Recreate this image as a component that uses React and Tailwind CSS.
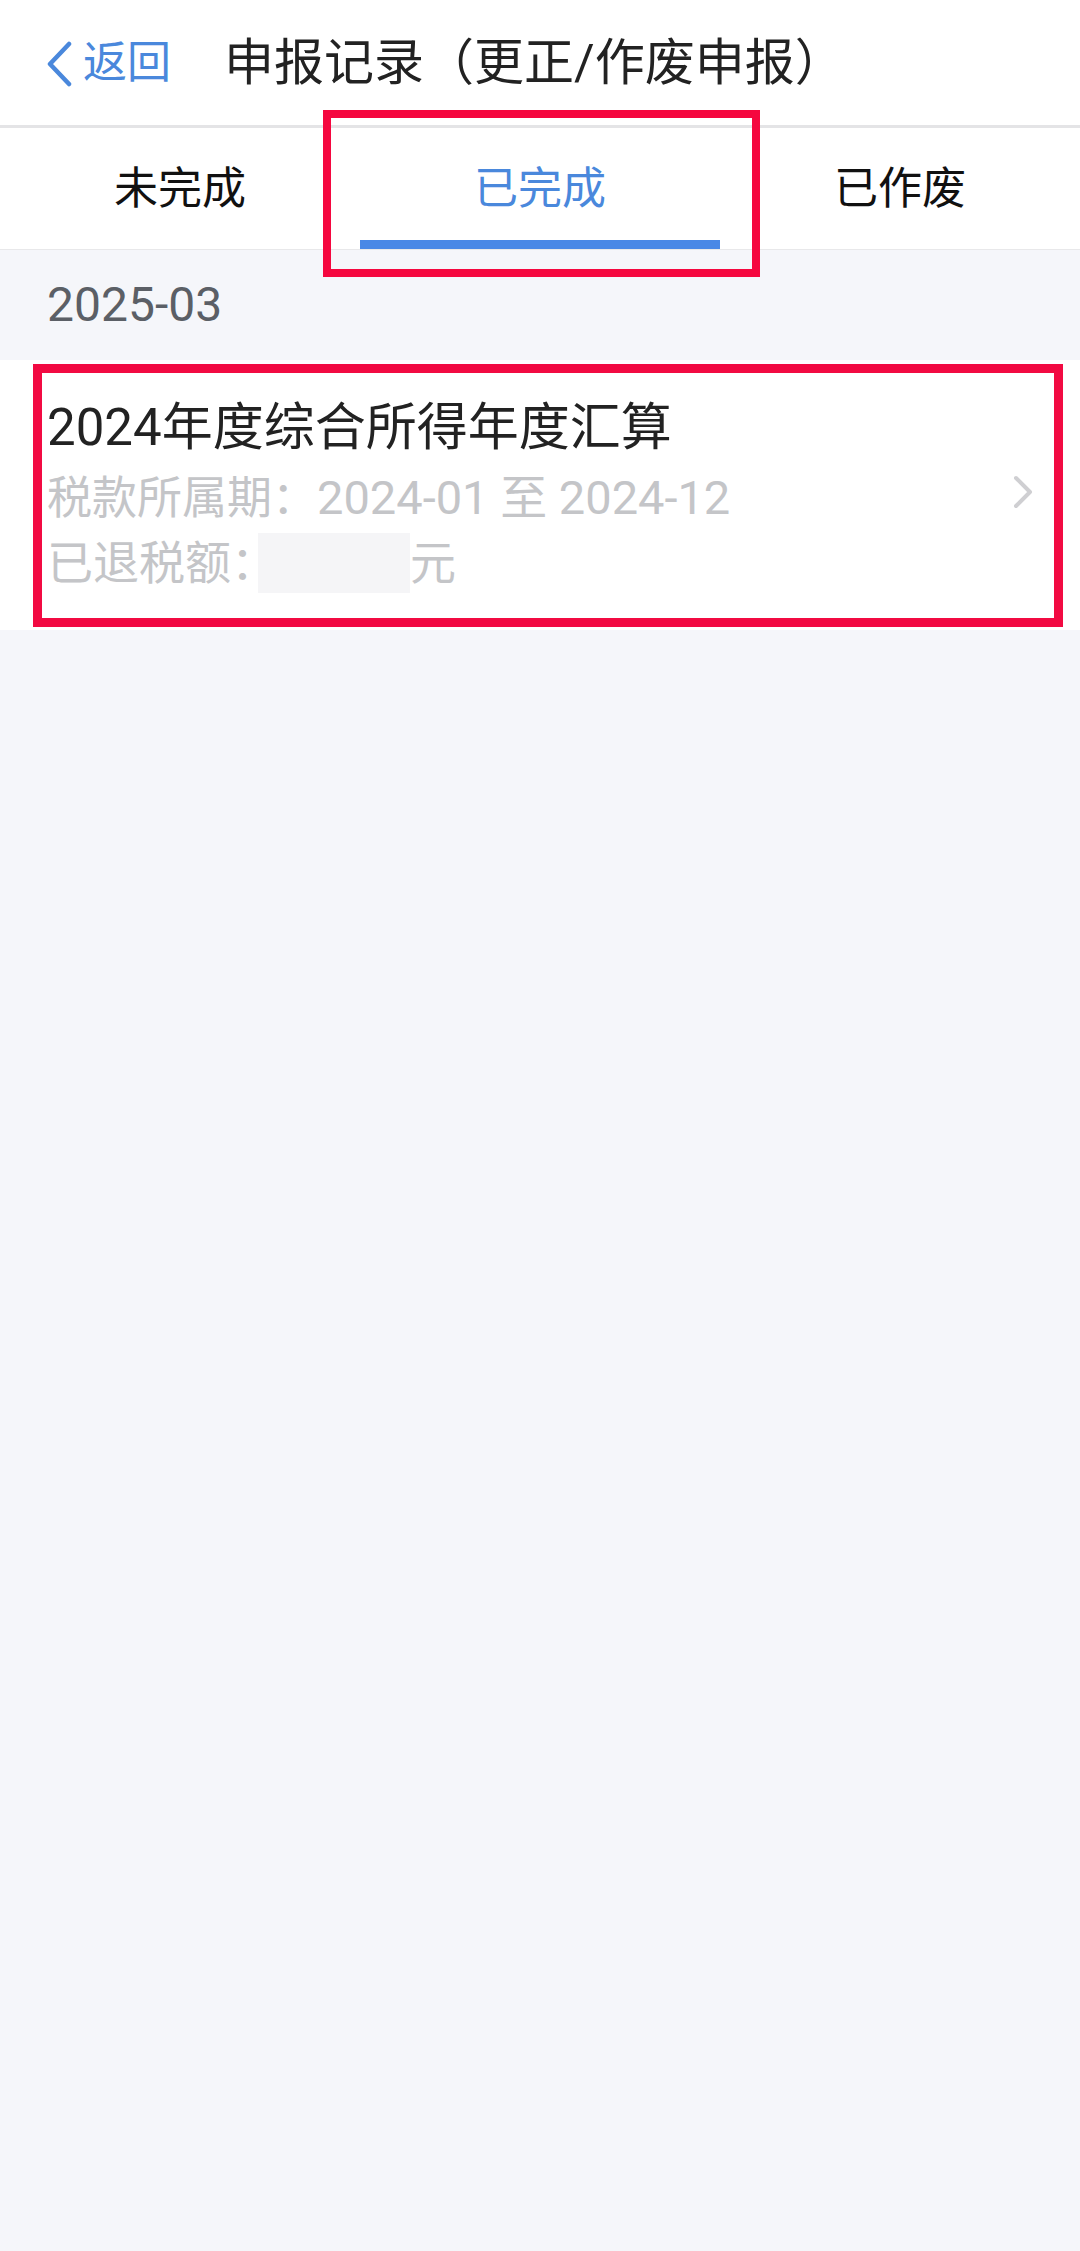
import React from "react";

const font = { fontFamily: '"Roboto", "Noto Sans CJK SC", sans-serif' };

export default function App() {
  return (
    <div
      className="relative w-[1080px] min-h-[2251px] bg-[#f5f6fa]"
      style={font}
    >
      {/* Header */}
      <div className="flex h-[128px] items-center border-b-[3px] border-[#e4e4e6] bg-white">
        <div className="ml-[45px] flex items-center text-[#4a88dc]">
          <svg width="28" height="46" viewBox="0 0 28 46" className="mt-[2px]">
            <path
              d="M24 3 L5 23 L24 43"
              fill="none"
              stroke="#4a88dc"
              strokeWidth="4.5"
              strokeLinecap="round"
              strokeLinejoin="round"
            />
          </svg>
          <span className="ml-[10px] text-[44px] leading-none">返回</span>
        </div>
        <div className="ml-[53px] text-[50px] leading-none text-[#222222]">
          申报记录（更正/作废申报）
        </div>
      </div>

      {/* Tabs */}
      <div className="grid h-[122px] grid-cols-3 border-b border-[#e8e8ea] bg-white">
        <div className="flex items-center justify-center text-[44px] text-[#111111]">
          未完成
        </div>
        <div className="relative flex items-center justify-center text-[44px] text-[#4a88dc]">
          已完成
          <div className="absolute bottom-0 left-0 right-0 h-[9px] bg-[#4a88e6]" />
        </div>
        <div className="flex items-center justify-center text-[44px] text-[#111111]">
          已作废
        </div>
      </div>

      {/* Date group */}
      <div className="flex h-[110px] items-center pl-[47px] text-[48px] text-[#5b5f66]">
        2025-03
      </div>

      {/* Card */}
      <div className="flex h-[270px] items-center bg-white pl-[47px] pr-[46px]">
        <div className="flex flex-1 flex-col">
          <div className="h-[60px] text-[51px] leading-[60px] text-[#222222]">
            2024年度综合所得年度汇算
          </div>
          <div className="mt-[10px] h-[60px] leading-[60px] text-[#c4c5c8]">
            <span className="text-[45px]">税款所属期：</span>
            <span className="text-[47px]">2024-01 至 2024-12</span>
          </div>
          <div className="mt-[5px] flex h-[60px] items-center text-[46px] leading-[60px] text-[#c4c5c8]">
            <span>已退税额：</span>
            <span className="-ml-[19px] h-[60px] w-[152px] bg-[#f5f5f7]" />
            <span>元</span>
          </div>
        </div>
        <svg width="22" height="34" viewBox="0 0 22 34" className="-mt-[6px]">
          <path
            d="M4 3 L18 17 L4 31"
            fill="none"
            stroke="#cfcfd2"
            strokeWidth="4"
            strokeLinecap="round"
            strokeLinejoin="round"
          />
        </svg>
      </div>

      {/* Annotation boxes */}
      <div className="absolute left-[323px] top-[110px] h-[167px] w-[437px] border-[8px] border-[#f5073f]" />
      <div className="absolute left-[33px] top-[364px] h-[263px] w-[1030px] border-[9px] border-[#f20a42]" />
    </div>
  );
}
